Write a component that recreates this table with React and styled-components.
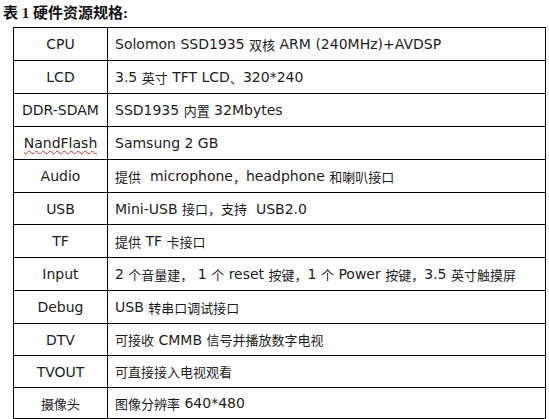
import { createGlobalStyle, styled } from "styled-components";

const GlobalStyle = createGlobalStyle`
  html, body {
    margin: 0;
    padding: 0;
    background: #fff;
  }
`;

const Page = styled.div`
  width: 549px;
  height: 419px;
  overflow: hidden;
  display: flex;
  flex-direction: column;
`;

const Caption = styled.div`
  height: 27px;
  box-sizing: border-box;
  padding: 4px 0 0 3px;
  font-family: "Liberation Serif", "Noto Sans CJK SC", serif;
  font-weight: 700;
  font-size: 15px;
  line-height: 18px;
  color: #111;
`;

const SpecGrid = styled.div`
  margin-left: 13px;
  width: 533px;
  box-sizing: border-box;
  display: grid;
  grid-template-columns: 94px 438px;
  grid-template-rows: ${(p) => p.$rows.map((h) => `${h}px`).join(" ")};
  border-top: 1px solid #000;
  border-left: 1px solid #000;
`;

const Cell = styled.div`
  box-sizing: border-box;
  display: flex;
  align-items: center;
  justify-content: ${(p) => (p.$head ? "center" : "flex-start")};
  padding: ${(p) => (p.$head ? "0" : "0 0 0 7px")};
  border-right: 1px solid #000;
  border-bottom: 1px solid #000;
  font-family: "DejaVu Sans", "Noto Sans CJK SC", sans-serif;
  font-size: 14px;
  color: #1c1c1c;
  white-space: pre;
`;

const Han = styled.span`
  font-family: "Noto Sans CJK SC", sans-serif;
  font-size: 13px;
`;

const Misspelled = styled.span`
  text-decoration: underline wavy #d42a2a;
  text-decoration-thickness: 1px;
  text-underline-offset: 2px;
`;

const specs = [
  ["CPU", "Solomon SSD1935 双核 ARM (240MHz)+AVDSP", 33],
  ["LCD", "3.5 英寸 TFT LCD、320*240", 33],
  ["DDR-SDAM", "SSD1935 内置 32Mbytes", 33],
  ["NandFlash", "Samsung 2 GB", 33],
  ["Audio", "提供  microphone，headphone 和喇叭接口", 33],
  ["USB", "Mini-USB 接口，支持  USB2.0", 32],
  ["TF", "提供 TF 卡接口", 33],
  ["Input", "2 个音量建， 1 个 reset 按键，1 个 Power 按键，3.5 英寸触摸屏", 33],
  ["Debug", "USB 转串口调试接口", 33],
  ["DTV", "可接收 CMMB 信号并播放数字电视", 32],
  ["TVOUT", "可直接接入电视观看", 32],
  ["摄像头", "图像分辨率 640*480", 31],
];

const hanRun = /([\u3000-\u303f\u4e00-\u9fff\uff00-\uffef]+)/;

const mixed = (text) =>
  text.split(hanRun).map((part, i) =>
    i % 2 ? <Han key={i}>{part}</Han> : part
  );

export default function App() {
  return (
    <Page>
      <GlobalStyle />
      <Caption>表 1 硬件资源规格:</Caption>
      <SpecGrid $rows={specs.map((s) => s[2])}>
        {specs.map(([name, desc]) => [
          <Cell $head key={name + "-h"}>
            {name === "NandFlash" ? <Misspelled>{name}</Misspelled> : mixed(name)}
          </Cell>,
          <Cell key={name + "-d"}>{mixed(desc)}</Cell>,
        ])}
      </SpecGrid>
    </Page>
  );
}
